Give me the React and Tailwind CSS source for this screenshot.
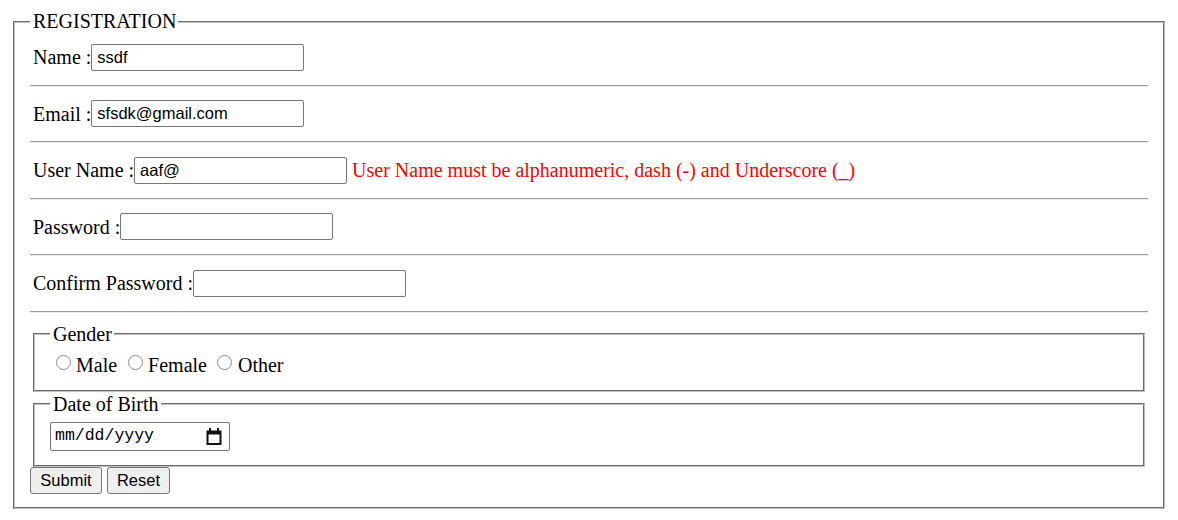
import React from "react";

const serif = "font-['Liberation_Serif','Times_New_Roman',serif]";
const sans = "font-['Liberation_Sans',Arial,sans-serif]";

function Field({ label, value = "", type = "text", error }) {
  return (
    <div className="flex h-[34.5px] items-center pl-[3px] text-[20px] text-black">
      <span className="whitespace-pre">{label} :</span>
      <input
        type={type}
        defaultValue={value}
        className={`${sans} h-[27px] w-[213px] rounded-[2px] border border-[#767676] bg-white pl-[5px] text-[16.5px] text-black outline-none`}
      />
      {error && <span className="ml-[5px] text-[#ff0000]">{error}</span>}
    </div>
  );
}

function Rule() {
  return <div className="my-[10px] h-[2px] border-t border-b border-t-[#9a9a9a] border-b-[#eeeeee]" />;
}

function Radio({ label }) {
  return (
    <label className="flex h-[25px] items-center">
      <span className="mt-[2.5px] ml-[5.5px] mr-[5.5px] h-[15px] w-[15px] self-start rounded-full border border-[#8a8a8a] bg-white" />
      <span>{label}</span>
    </label>
  );
}

export default function App() {
  return (
    <div className={`${serif} bg-white p-[10px] text-black`}>
      <fieldset className="mx-[3px] border-2 border-[#c0c0c0] px-[15px] pt-[7px] pb-[13px] [border-style:groove]">
        <legend className="pl-[3px] pr-[2px] text-[20px] leading-[23px]">REGISTRATION</legend>

        <Field label="Name" value="ssdf" />
        <Rule />
        <Field label="Email" value="sfsdk@gmail.com" />
        <Rule />
        <Field
          label="User Name"
          value="aaf@"
          error="User Name must be alphanumeric, dash (-) and Underscore (_)"
        />
        <Rule />
        <Field label="Password" type="password" />
        <Rule />
        <Field label="Confirm Password" type="password" />
        <Rule />

        <fieldset className="mx-[3px] mt-[1px] border-2 border-[#c0c0c0] px-[15px] pt-[7px] pb-[12px] [border-style:groove]">
          <legend className="pl-[3px] pr-[2px] text-[20px] leading-[23px]">Gender</legend>
          <div className="flex gap-[5px] text-[20px]">
            <Radio label="Male" />
            <Radio label="Female" />
            <Radio label="Other" />
          </div>
        </fieldset>

        <fieldset className="mx-[3px] mt-[1px] border-2 border-[#c0c0c0] px-[15px] pt-[6px] pb-[14px] [border-style:groove]">
          <legend className="pl-[3px] pr-[2px] text-[20px] leading-[23px]">Date of Birth</legend>
          <div className="flex h-[29px] w-[180px] items-center justify-between rounded-[2px] border border-[#767676] bg-white pl-[4px] pr-[7px]">
            <span className="font-['Liberation_Mono','DejaVu_Sans_Mono',monospace] text-[16.5px] text-black">mm/dd/yyyy</span>
            <svg width="16" height="17" viewBox="0 0 16 17" fill="#111">
              <rect x="3" y="0" width="2" height="3" />
              <rect x="11" y="0" width="2" height="3" />
              <path fillRule="evenodd" d="M0.5 2.5h15v14.5h-15z M2.5 6.5h11v8.5h-11z" />
            </svg>
          </div>
        </fieldset>

        <div className={`${sans} flex gap-[5px] text-[16.5px]`}>
          <button className="h-[27px] w-[72px] rounded-[3px] border border-[#767676] bg-[#efefef] text-black">
            Submit
          </button>
          <button className="h-[27px] w-[63px] rounded-[3px] border border-[#767676] bg-[#efefef] text-black">
            Reset
          </button>
        </div>
      </fieldset>
    </div>
  );
}
